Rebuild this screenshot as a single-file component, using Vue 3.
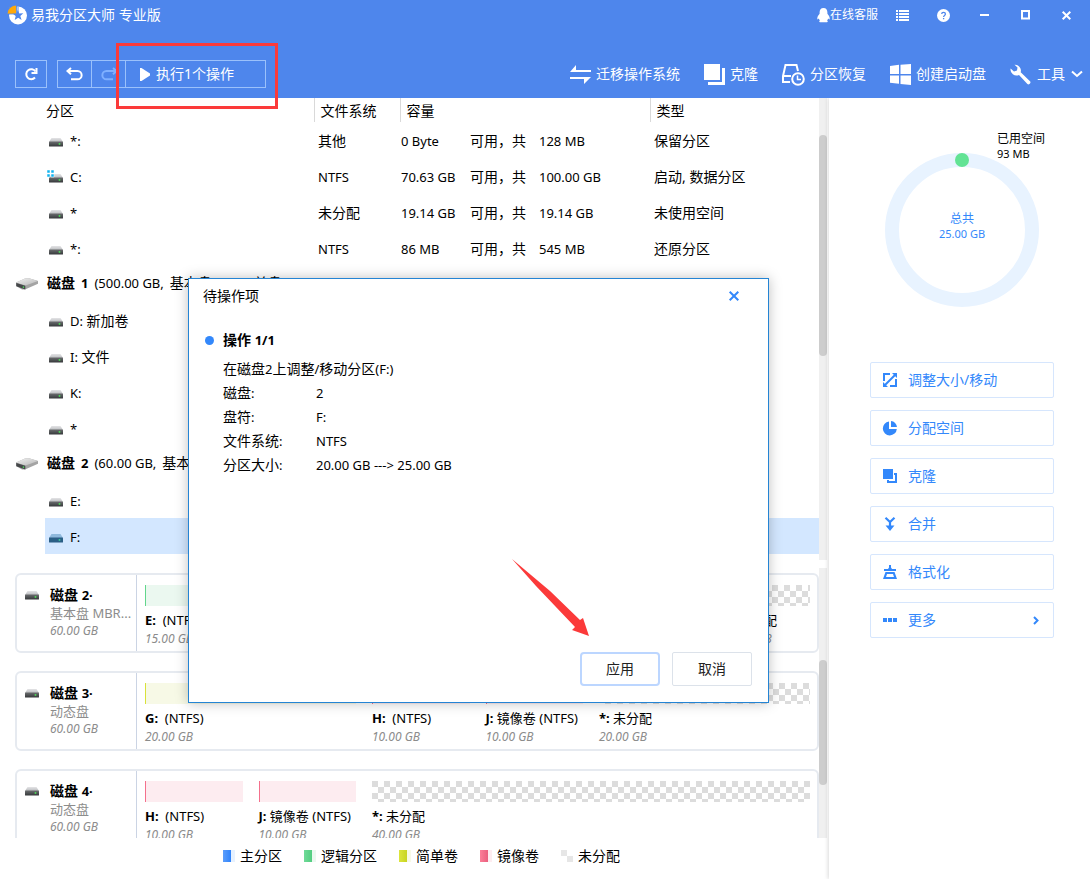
<script setup>
const rows = [
  { name: '*:', fs: '其他', cjk: true, free: '0 Byte', total: '128 MB', type: '保留分区' },
  { name: 'C:', system: true, fs: 'NTFS', free: '70.63 GB', total: '100.00 GB', type: '启动, 数据分区' },
  { name: '*', fs: '未分配', cjk: true, free: '19.14 GB', total: '19.14 GB', type: '未使用空间' },
  { name: '*:', fs: 'NTFS', free: '86 MB', total: '545 MB', type: '还原分区' },
  { disk: '磁盘', number: '1', size: '(500.00 GB,', kind: '基本盘', scheme: ', MBR, ', tail: '单盘)' },
  { name: 'D:', label: '新加卷' },
  { name: 'I:', label: '文件' },
  { name: 'K:' },
  { name: '*' },
  { disk: '磁盘', number: '2', size: '(60.00 GB,', kind: '基本盘', scheme: ', MBR, ', tail: '单盘)' },
  { name: 'E:' },
  { name: 'F:', selected: true },
]

const disks = [
  {
    number: '2', kind: '基本盘', scheme: 'MBR...', size: '60.00 GB',
    parts: [
      { span: 15, tone: 'green', name: 'E:', fs: '(NTFS)', size: '15.00 GB' },
      { span: 36, tone: 'green', name: 'F:', fs: '(NTFS)', size: '25.00 GB' },
      { span: 9, tone: 'free', name: '*:', label: '未分配', size: '20.00 GB' },
    ],
  },
  {
    number: '3', kind: '动态盘', size: '60.00 GB',
    parts: [
      { span: 20, tone: 'yellow', name: 'G:', fs: '(NTFS)', size: '20.00 GB' },
      { span: 10, tone: 'pink', name: 'H:', fs: '(NTFS)', size: '10.00 GB' },
      { span: 10, tone: 'pink', name: 'J:', label: '镜像卷', fs: '(NTFS)', size: '10.00 GB' },
      { span: 20, tone: 'free', name: '*:', label: '未分配', size: '20.00 GB' },
    ],
  },
  {
    number: '4', kind: '动态盘', size: '60.00 GB',
    parts: [
      { span: 10, tone: 'pink', name: 'H:', fs: '(NTFS)', size: '10.00 GB' },
      { span: 10, tone: 'pink', name: 'J:', label: '镜像卷', fs: '(NTFS)', size: '10.00 GB' },
      { span: 40, tone: 'free', name: '*:', label: '未分配', size: '40.00 GB' },
    ],
  },
]

const legend = [
  { tone: 'blue', text: '主分区' },
  { tone: 'green', text: '逻辑分区' },
  { tone: 'yellow', text: '简单卷' },
  { tone: 'pink', text: '镜像卷' },
  { tone: 'free', text: '未分配' },
]

const actions = [
  { icon: 'resize', text: '调整大小/移动' },
  { icon: 'pie', text: '分配空间' },
  { icon: 'copy', text: '克隆' },
  { icon: 'merge', text: '合并' },
  { icon: 'format', text: '格式化' },
  { icon: 'more', text: '更多', arrow: true },
]

const details = [
  { term: '磁盘', value: '2' },
  { term: '盘符', value: 'F:' },
  { term: '文件系统', value: 'NTFS' },
  { term: '分区大小', value: '20.00 GB ---> 25.00 GB' },
]

const columns = (parts) => parts.map((p) => `minmax(0, ${p.span}fr)`).join(' ')
</script>

<template>
  <div class="app">
    <svg class="defs" aria-hidden="true">
      <defs>
        <linearGradient id="lid" x1="0" y1="0" x2="0" y2="1">
          <stop offset="0" stop-color="#e4e4e6" /><stop offset="1" stop-color="#b9bbbe" />
        </linearGradient>
        <linearGradient id="front" x1="0" y1="0" x2="0" y2="1">
          <stop offset="0" stop-color="#6a6c6e" /><stop offset="1" stop-color="#35383a" />
        </linearGradient>
        <linearGradient id="slab" x1="0" y1="0" x2="1" y2="1">
          <stop offset="0" stop-color="#f4f4f4" /><stop offset="1" stop-color="#b5b5b5" />
        </linearGradient>
        <symbol id="drive" viewBox="0 0 14 9">
          <path d="M2.5 0h9L14 4H0z" fill="url(#lid)" />
          <rect y="3.6" width="14" height="4.9" rx=".6" fill="url(#front)" />
          <rect x="9.7" y="5.2" width="1.6" height="1.5" fill="#4cf05a" />
        </symbol>
        <symbol id="drive-selected" viewBox="0 0 14 9">
          <path d="M2.5 0h9L14 4H0z" fill="#8fb9dc" />
          <rect y="3.6" width="14" height="4.9" rx=".6" fill="#2b5f86" />
          <rect x="9.7" y="5.2" width="1.6" height="1.5" fill="#3fe0a0" />
        </symbol>
        <symbol id="disk" viewBox="0 0 22 12">
          <path d="M0 4.6 9 0.6q2-.7 4-.3l9 2.6v2.8L9 11.4q-1.500.3-3 0L0 8z" fill="#a4a4a4" />
          <path d="M0 4.6 9 .6q2-.7 4-.3l9 2.6L9.500 7.500z" fill="url(#slab)" />
          <path d="M.3 5 9.300 7.800V11.400L.3 8.200z" fill="#45484a" />
          <rect x="6.800" y="8.500" width="1.300" height="1.300" fill="#4cf05a" />
        </symbol>
      </defs>
    </svg>

    <header class="top">
      <div class="titlebar">
        <h1 class="brand">
          <svg width="20" height="20" viewBox="0 0 20 20" aria-hidden="true">
            <circle cx="11" cy="10.500" r="9" fill="#fff" />
            <path d="M11 10.500V1.500" stroke="#4e86ec" />
            <path d="M9.500 9H0A9.500 9.500 0 0 1 9.500 0z" fill="#ffa90a" stroke="#4e86ec" stroke-width=".8" />
            <path d="m10.800 5 1.500 3.600 4-.3-3 2.700 1.300 3.900-3.400-2.100-3.500 2.100 1-4L5.800 8.700l3.700-.2z" fill="#4e86ec" />
          </svg>
          易我分区大师 专业版
        </h1>
        <div class="window-tools">
          <a class="support" href="#support">
            <svg width="13" height="15" viewBox="0 0 13 15" aria-hidden="true">
              <path d="M6.500 0C3.800 0 2.600 2 2.600 4.500v1.300C1.300 7.300.3 9 .3 10.600c0 1.200.7 1 1.500 0 .2.900.6 1.400 1.100 1.900-.9.500-.9 1.800.2 1.800h6.800c1.100 0 1.100-1.300.2-1.800.5-.5.900-1 1.100-1.900.8 1 1.500 1.200 1.500 0 0-1.600-1-3.300-2.300-4.800V4.500C10.400 2 9.200 0 6.500 0z" fill="#fff" />
            </svg>
            在线客服
          </a>
          <button class="win" aria-label="菜单">
            <svg width="13" height="11" viewBox="0 0 13 11" fill="#fff"><path d="M0 0h2v2H0zM3 0h10v2H3zM0 3h2v2H0zM3 3h10v2H3zM0 6h2v2H0zM3 6h10v2H3zM0 9h2v2H0zM3 9h10v2H3z" /></svg>
          </button>
          <button class="win" aria-label="帮助">
            <svg width="13" height="13" viewBox="0 0 13 13"><circle cx="6.500" cy="6.500" r="6.500" fill="#fff" /><path d="M4.700 5.100c0-2.300 3.700-2.300 3.700 0 0 1.400-1.800 1.300-1.800 2.800M6.600 9v1.300" fill="none" stroke="#4e86ec" stroke-width="1.300" /></svg>
          </button>
          <button class="win" aria-label="最小化">
            <svg width="9" height="10" viewBox="0 0 9 10"><path d="M0 5h9" stroke="#fff" stroke-width="2" /></svg>
          </button>
          <button class="win" aria-label="最大化">
            <svg width="9" height="10" viewBox="0 0 9 10"><rect x="1" y="1" width="7" height="7.500" fill="none" stroke="#fff" stroke-width="2" /></svg>
          </button>
          <button class="win" aria-label="关闭">
            <svg width="9" height="9" viewBox="0 0 9 9"><path d="m.7.7 7.600 7.600M8.300.7.7 8.300" stroke="#fff" stroke-width="2" /></svg>
          </button>
        </div>
      </div>

      <div class="toolbar">
        <button class="boxed refresh" aria-label="刷新">
          <svg width="14" height="14" viewBox="0 0 14 14" fill="none" stroke="#fff" stroke-width="2"><path d="M11.500 4.500A5 5 0 1 0 11 10.500" /><path d="M12.500 1v5H7.500" /></svg>
        </button>
        <div class="group">
          <button class="boxed undo" aria-label="撤销">
            <svg width="18" height="14" viewBox="0 0 18 14" fill="none" stroke="#fff" stroke-width="2"><path d="M5 1 1.500 4 5 7.200M2 4h9.500a4 4 0 0 1 0 8.300H5" /></svg>
          </button>
          <button class="boxed redo" aria-label="重做" disabled>
            <svg width="18" height="14" viewBox="0 0 18 14" fill="none" stroke="#7fb0ff" stroke-width="2"><path d="m13 1 3.500 3L13 7.200M16 4H6.500a4 4 0 0 0 0 8.300H13" /></svg>
          </button>
          <button class="boxed execute">
            <svg width="10" height="13" viewBox="0 0 10 13"><path d="M0 0h1.500L10 5.500v2L1.500 13H0z" fill="#fff" /></svg>
            <span>执行1个操作</span>
          </button>
        </div>
        <nav class="tools">
          <a href="#migrate">
            <svg width="21" height="21" viewBox="0 0 21 21" fill="#fff"><path d="M6 1v5h15v2H0zM0 13h21l-7 7v-5H0z" /></svg>
            迁移操作系统
          </a>
          <a href="#clone">
            <svg width="21" height="21" viewBox="0 0 21 21" fill="#fff"><path d="M0 0h16v16H0zM18 4h3v17H4v-3h14z" /></svg>
            克隆
          </a>
          <a href="#recover">
            <svg width="23" height="23" viewBox="0 0 23 23" fill="none" stroke="#fff" stroke-width="2"><path d="M8 19H1v-6L3.500 2h11L16 8M1 13h8" /><circle cx="16" cy="16" r="5.800" /><path d="M15.500 12.500v4H19" stroke-width="1.500" /></svg>
            分区恢复
          </a>
          <a href="#boot">
            <svg width="21" height="21" viewBox="0 0 21 21" fill="#fff"><path d="M0 2l9-1.200V10H0zM10.500.7 21 0v10H10.500zM0 11.500h9v8.200L0 18.700zM10.500 11.500H21V21l-10.500-1z" /></svg>
            创建启动盘
          </a>
          <a href="#tools" class="last">
            <svg width="21" height="21" viewBox="0 0 21 21" fill="#fff"><path d="M4.500.7a6 6 0 0 1 6.200 7.600L20 17.200q1 1 0 2.200l-.6.600q-1 .8-2 0L9 11A6 6 0 0 1 .6 4.500L4 7.500 7 6.500 7.500 3.500z" /></svg>
            <span>工具</span>
            <svg width="12" height="8" viewBox="0 0 12 8"><path d="m1 1.500 5 4.500 5-4.500" fill="none" stroke="#fff" stroke-width="2" /></svg>
          </a>
        </nav>
      </div>
      <div class="highlight"></div>
    </header>

    <div class="body">
      <main class="left">
        <section class="list">
          <table>
            <colgroup><col class="c0" /><col class="c1" /><col class="c2" /><col class="c3" /><col /></colgroup>
            <thead>
              <tr><th colspan="2" class="first">分区</th><th>文件系统</th><th>容量</th><th>类型</th></tr>
            </thead>
            <tbody>
              <tr v-for="(r, i) in rows" :key="i" :class="{ selected: r.selected }">
                <td v-if="r.disk" colspan="5" class="disk-cell">
                  <div class="disk-row">
                    <svg width="22" height="12"><use href="#disk" /></svg>
                    <div class="disk-text">
                      <b>{{ r.disk }}</b><b class="lat">{{ r.number }}</b><span class="lat">{{ r.size }}</span>
                      <span>{{ r.kind }}<span class="lat">{{ r.scheme }}</span>{{ r.tail }}</span>
                    </div>
                  </div>
                </td>
                <template v-else>
                  <td></td>
                  <td class="fill">
                    <div class="vol">
                      <svg v-if="r.system" class="sys" width="16" height="13" viewBox="0 0 16 13">
                        <use href="#drive" x="2" y="4" width="14" height="9" />
                        <path d="M0 0h3v3H0zM4 0h3v3H4zM0 4h3v3H0zM4 4h3v3H4z" fill="#12b4f0" stroke="#fff" stroke-width=".5" />
                      </svg>
                      <svg v-else width="14" height="9"><use :href="r.selected ? '#drive-selected' : '#drive'" /></svg>
                      <span><span class="lat">{{ r.name }}</span><template v-if="r.label">&nbsp;{{ r.label }}</template></span>
                    </div>
                  </td>
                  <td class="fill fs" :class="{ lat: !r.cjk }">{{ r.fs }}</td>
                  <td class="fill cap">
                    <div v-if="r.free" class="capacity"><span class="lat">{{ r.free }}</span><span>可用，共</span><span class="lat">{{ r.total }}</span></div>
                  </td>
                  <td class="fill type">{{ r.type }}</td>
                </template>
              </tr>
            </tbody>
          </table>
          <div class="track"><div class="thumb upper"></div></div>
        </section>

        <section class="maps">
          <div class="cards">
            <article v-for="d in disks" :key="d.number" class="card">
              <div class="info">
                <svg width="14" height="9"><use href="#drive" /></svg>
                <div>
                  <div class="dname">磁盘 <span class="lat">{{ d.number }}·</span></div>
                  <div class="dkind">{{ d.kind }} {{ d.scheme }}</div>
                  <div class="dsize">{{ d.size }}</div>
                </div>
              </div>
              <div class="parts" :style="{ gridTemplateColumns: columns(d.parts) }">
                <div v-for="(p, i) in d.parts" :key="i" class="part">
                  <div class="bar" :class="p.tone"></div>
                  <div class="pname"><b>{{ p.name }}</b>&nbsp;{{ p.label }} {{ p.fs }}</div>
                  <div class="dsize">{{ p.size }}</div>
                </div>
              </div>
            </article>
          </div>
          <div class="track"><div class="thumb lower"></div></div>
        </section>

        <ul class="legend">
          <li v-for="l in legend" :key="l.tone"><i :class="l.tone"></i>{{ l.text }}</li>
        </ul>
      </main>

      <aside class="side">
        <div class="usage">
          <svg width="154" height="154" viewBox="0 0 154 154" aria-hidden="true">
            <circle cx="77" cy="77" r="70" fill="none" stroke="#e8f3ff" stroke-width="14" />
            <circle cx="77" cy="7" r="7" fill="#62e394" />
          </svg>
          <div class="total">总共<br /><span class="small">25.00 GB</span></div>
          <div class="used">已用空间<br /><span class="small">93 MB</span></div>
        </div>
        <div class="actions">
          <button v-for="a in actions" :key="a.icon" class="action">
            <svg width="14" height="14" viewBox="0 0 14 14" fill="#3388fb" aria-hidden="true">
              <g v-if="a.icon === 'resize'"><path d="M0 0h7v2H2v6H0zM14 14H7v-2h5V6h2zM9 0h5v5zM0 9v5h5z" /><path d="M2 12 12 2" stroke="#3388fb" stroke-width="2" /></g>
              <g v-else-if="a.icon === 'pie'"><path d="M6 .5V8h7.800A7 7 0 1 1 6 .5z" /><path d="M8 0a6.500 6.500 0 0 1 6 6H8z" /></g>
              <g v-else-if="a.icon === 'copy'"><path d="M0 0h10v10H0z" /><path d="M11 5H13v8H5v-2" fill="none" stroke="#3388fb" stroke-width="2" /></g>
              <g v-else-if="a.icon === 'merge'"><path d="M2.500 8.500h9L7 14z" /><path d="M2.500.8 7 5 11.500.8M7 4v6" fill="none" stroke="#3388fb" stroke-width="2.200" /></g>
              <g v-else-if="a.icon === 'format'"><path d="M6 0h2v2.500l1 1.500h4v2H1V4h4l1-1.500zM2.500 7h9l2.500 7H0zM4 9l-1 3h8l-1-3z" fill-rule="evenodd" /></g>
              <path v-else d="M0 5h4v4H0zM5 5h4v4H5zM10 5h4v4h-4z" />
            </svg>
            <span>{{ a.text }}</span>
            <svg v-if="a.arrow" class="go" width="6" height="9" viewBox="0 0 6 9"><path d="m1 1 3.500 3.500L1 8" fill="none" stroke="#3388fb" stroke-width="2" /></svg>
          </button>
        </div>
      </aside>
    </div>

    <div class="dialog" role="dialog" aria-labelledby="dlg-title">
      <div class="dlg-head">
        <h2 id="dlg-title">待操作项</h2>
        <button class="dlg-close" aria-label="关闭">
          <svg width="10" height="10" viewBox="0 0 10 10"><path d="m.7.7 8.600 8.600M9.300.7.7 9.300" stroke="#3388fb" stroke-width="2" /></svg>
        </button>
      </div>
      <div class="dlg-body">
        <h3>操作 <span class="lat">1/1</span></h3>
        <p>在磁盘<span class="lat">2</span>上调整<span class="lat">/</span>移动分区<span class="lat">(F:)</span></p>
        <dl>
          <template v-for="d in details" :key="d.term">
            <dt>{{ d.term }}<span class="lat">:</span></dt><dd class="lat">{{ d.value }}</dd>
          </template>
        </dl>
      </div>
      <div class="dlg-foot">
        <button class="btn primary">应用</button>
        <button class="btn">取消</button>
      </div>
      <svg class="pointer" width="78" height="78" viewBox="0 0 78 78" aria-hidden="true">
        <path d="M0 0 38 32 68 61 71 59 77 77 60 71 63 68 24 27z" fill="#fb3a3a" />
      </svg>
    </div>
  </div>
</template>

<style>
body { margin: 0; background: #fff; }
</style>

<style scoped>
.app {
  position: relative;
  display: flex;
  flex-direction: column;
  min-height: 100vh;
  font: 14px/20px "Noto Sans", "Noto Sans CJK SC", sans-serif;
  color: #000;
}
.app *, .app *::before { box-sizing: border-box; }
svg { flex: none; display: block; overflow: visible; }
.defs { position: absolute; width: 0; height: 0; }
button { font: inherit; color: inherit; background: none; border: 0; padding: 0; }
a { color: inherit; text-decoration: none; }
h1, h2, h3, p, dl, dd, ul { margin: 0; padding: 0; font-size: 14px; font-weight: 400; }
.lat, dd.lat { font-size: 13px; }

.top { position: relative; height: 98px; background: #4e86ec; color: #fff; }
.titlebar { display: flex; justify-content: space-between; height: 30px; align-items: center; padding: 0 3px 0 7px; }
.brand { display: flex; align-items: center; gap: 4px; }
.window-tools { display: flex; align-items: center; }
.support { display: flex; align-items: center; font-size: 12px; margin-right: 4px; }
.win { display: flex; align-items: center; justify-content: center; width: 41px; height: 20px; }
.toolbar { display: flex; align-items: center; padding: 0 7px 0 15px; margin-top: 30px; height: 28px; }
.boxed { display: flex; align-items: center; justify-content: center; height: 28px; border: 1px solid #9bc1fb; }
.refresh { width: 32px; margin-right: 10px; }
.group { display: flex; }
.undo { width: 35px; }
.redo { width: 34px; border-left: 0; }
.execute { width: 140px; border-left: 0; gap: 6px; justify-content: flex-start; padding-left: 14px; }
.tools { display: flex; margin-left: auto; gap: 24px; }
.tools a { display: flex; align-items: center; gap: 5px; }
.tools .last { gap: 6px; }
.highlight { position: absolute; left: 116px; top: 43px; width: 162px; height: 66px; border: 3px solid #fb3a3a; z-index: 2; }

.body { display: flex; flex: 1; }
.left { flex: 1; min-width: 0; display: flex; flex-direction: column; padding-right: 2px; }
.list { display: flex; height: 462px; overflow: hidden; }
table { flex: 1; table-layout: fixed; border-collapse: collapse; width: 100%; align-self: flex-start; }
.c0 { width: 45px; }
.c1 { width: 269px; }
.c2 { width: 86px; }
.c3 { width: 250px; }
th { height: 24px; padding: 2px 0 0 6px; text-align: left; font-weight: 400; border-left: 1px solid #d9d9d9; }
th.first { padding-left: 46px; border-left: 0; }
td { height: 36px; padding: 2px 0 0; white-space: nowrap; }
.disk-cell { padding: 0 0 2px; }
.fs { padding-left: 4px; }
.cap { padding-left: 1px; }
.type { padding-left: 4px; }
.selected .fill { background: #d3e7ff; }
.vol { display: flex; align-items: center; gap: 7px; padding-left: 4px; }
.vol svg { margin-top: 2px; }
.vol .sys { margin: 0 0 2px -2px; }
.capacity { display: grid; grid-template-columns: 69px 69px auto; }
.disk-row { display: flex; align-items: center; gap: 9px; padding-left: 16px; }
.disk-row svg { margin-top: 2px; }
.disk-text { display: flex; gap: 6px; white-space: pre; }
.track { flex: none; width: 8px; background: #f0f0f0; }
.thumb { background: #cdcdcd; border-radius: 4px; }
.upper { margin-top: 37px; height: 221px; }
.lower { margin-top: 92px; height: 125px; }

.maps { display: flex; height: 270px; margin-top: 8px; overflow: hidden; }
.cards { flex: 1; min-width: 0; display: flex; flex-direction: column; gap: 18px; padding: 5px 0 0 15px; }
.card { flex: none; display: flex; height: 80px; border: 2px solid #e6eaf0; border-radius: 6px; }
.info { display: flex; gap: 11px; width: 120px; padding: 11px 0 0 8px; border-right: 1px solid #cbd4e4; white-space: nowrap; }
.info svg { margin-top: 5px; }
.dname { font-weight: 700; line-height: 18px; }
.dkind { font-size: 13px; line-height: 18px; color: #8c8c8c; }
.dsize { font-size: 12px; line-height: 18px; font-style: italic; color: #8c8c8c; }
.parts { flex: 1; display: grid; padding: 10px 0 0 8px; margin-right: -9px; }
.part { padding-right: 16px; white-space: nowrap; }
.bar { height: 21px; margin-bottom: 5px; }
.bar.green { background: #ebf8f0; border-left: 1px solid #62d68c; }
.bar.yellow { background: #f7f9e6; border-left: 1px solid #d9e23a; }
.bar.pink { background: #fdecf0; border-left: 1px solid #f4708c; }
.bar.free { background: repeating-conic-gradient(#fff 0 25%, #dcdcdc 0 50%) 0 0 / 12px 12px; }
.pname { font-size: 13px; line-height: 18px; margin-bottom: 1px; }
.legend { display: flex; justify-content: center; gap: 22px; height: 41px; padding: 0 0 6px 16px; align-items: center; list-style: none; }
.legend li { display: flex; align-items: center; gap: 5px; }
.legend i { width: 12px; height: 12px; }
.legend .blue { background: linear-gradient(90deg, #5b9dfb, #2f83fb 8px, #e6f1ff 8px); }
.legend .green { background: linear-gradient(90deg, #70da98, #52cd80 8px, #ebf8f0 8px); }
.legend .yellow { background: linear-gradient(90deg, #dce53c, #c8d422 8px, #f7f9e6 8px); }
.legend .pink { background: linear-gradient(90deg, #fb7e98, #ea5f7e 8px, #fdecf0 8px); }
.legend .free { background: repeating-conic-gradient(#fff 0 25%, #e6e6e6 0 50%) 0 0 / 12px 12px; }

.side { flex: none; width: 261px; padding: 55px 36px 0 41px; box-shadow: -1px 0 4px #00000026; clip-path: inset(0 0 0 -6px); background: #fff; }
.usage { position: relative; width: 154px; margin: 0 auto 55px; font-size: 12px; line-height: 15px; }
.small { font-size: 11px; }
.total { position: absolute; left: 0; right: 0; top: 58px; text-align: center; color: #3388fb; }
.used { position: absolute; left: 112px; top: -22px; white-space: nowrap; }
.actions { display: flex; flex-direction: column; gap: 12px; }
.action { display: flex; align-items: center; gap: 11px; height: 36px; padding: 0 14px 0 12px; border: 1px solid #d6e6fd; border-radius: 2px; color: #3388fb; }
.go { margin-left: auto; }

.dialog { position: absolute; left: 188px; top: 278px; width: 581px; min-height: 425px; display: flex; flex-direction: column; background: #fff; border: 1px solid #2484d4; box-shadow: 0 0 12px #00000040; }
.dlg-head { display: flex; align-items: center; justify-content: space-between; height: 34px; padding: 0 29px 0 14px; }
.dlg-close { display: flex; }
.dlg-body { padding: 15px 34px; line-height: 24px; }
.dlg-body h3 { position: relative; font-weight: 700; margin-bottom: 5px; }
.dlg-body h3::before { content: ""; position: absolute; left: -18px; top: 8px; width: 9px; height: 9px; border-radius: 50%; background: #3388fb; }
dl { display: grid; grid-template-columns: 93px 1fr; }
.dlg-foot { display: flex; justify-content: flex-end; gap: 12px; margin-top: auto; padding: 0 16px 16px; }
.btn { width: 80px; height: 34px; border: 1px solid #dce2ea; border-radius: 2px; color: #222; }
.btn.primary { border: 2px solid #bcd6ff; border-radius: 4px; }
.pointer { position: absolute; left: 323px; top: 280px; }
</style>
